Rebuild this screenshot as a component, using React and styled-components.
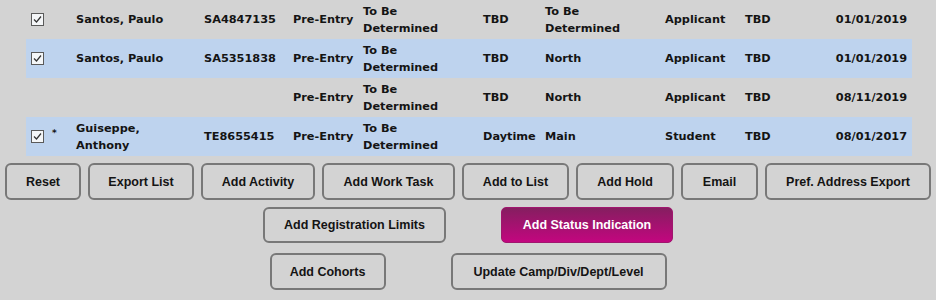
import React from "react";
import styled, { createGlobalStyle } from "styled-components";

const GlobalStyle = createGlobalStyle`
  html, body {
    margin: 0;
    padding: 0;
    background: #d3d3d3;
  }
`;

const Page = styled.div`
  width: 936px;
  height: 300px;
  background: #d3d3d3;
  overflow: hidden;
`;

const Table = styled.div`
  padding-left: 26px;
  width: 886px;
`;

const Row = styled.div`
  display: grid;
  grid-template-columns: 20px 25px 128px 89px 70px 120px 62px 120px 80px 80px 1fr;
  align-items: center;
  height: 39px;
  padding: 0 5px;
  background: ${(p) => (p.$alt ? "#bed3ee" : "transparent")};
  font-family: "DejaVu Sans", "Liberation Sans", sans-serif;
  font-weight: bold;
  font-size: 11.3px;
  line-height: 17px;
  color: #141414;
`;

const Cell = styled.div`
  text-align: ${(p) => (p.$right ? "right" : "left")};
  white-space: ${(p) => (p.$wrap ? "normal" : "nowrap")};
`;

const Star = styled.div`
  font-size: 9px;
  line-height: 9px;
  margin-top: -6px;
  padding-left: 1px;
`;

const Box = styled.div`
  width: 11px;
  height: 11px;
  border: 1px solid #5a5a5a;
  background: #f4f6f8;
  display: flex;
  align-items: center;
  justify-content: center;
`;

const Check = () => (
  <Box>
    <svg width="9" height="9" viewBox="0 0 9 9">
      <path d="M1 4.5 L3.5 7 L8 1.5" fill="none" stroke="#333" strokeWidth="1.2" />
    </svg>
  </Box>
);

const Buttons = styled.div`
  display: flex;
  justify-content: center;
  gap: ${(p) => p.$gap}px;
  margin-top: ${(p) => p.$top}px;
`;

const Button = styled.button`
  width: ${(p) => p.$w}px;
  height: ${(p) => p.$h || 37}px;
  box-sizing: border-box;
  border: 2px solid #787878;
  border-radius: 6px;
  background: #d3d3d3;
  color: #141414;
  font-family: "Liberation Sans", Arial, sans-serif;
  font-weight: bold;
  font-size: 12.5px;
  padding: 0;
  cursor: pointer;
`;

const StatusButton = styled(Button)`
  border: 1px solid #a0166e;
  border-radius: 5px;
  background: linear-gradient(to bottom, #851e60, #c3067f);
  color: #ffffff;
`;

const rows = [
  { check: true, name: "Santos, Paulo", id: "SA4847135", stage: "Pre-Entry", prog: "To Be Determined", sess: "TBD", campus: "To Be Determined", type: "Applicant", tbd: "TBD", date: "01/01/2019" },
  { check: true, name: "Santos, Paulo", id: "SA5351838", stage: "Pre-Entry", prog: "To Be Determined", sess: "TBD", campus: "North", type: "Applicant", tbd: "TBD", date: "01/01/2019" },
  { check: false, name: "", id: "", stage: "Pre-Entry", prog: "To Be Determined", sess: "TBD", campus: "North", type: "Applicant", tbd: "TBD", date: "08/11/2019" },
  { check: true, star: true, name: "Guiseppe, Anthony", id: "TE8655415", stage: "Pre-Entry", prog: "To Be Determined", sess: "Daytime", campus: "Main", type: "Student", tbd: "TBD", date: "08/01/2017" },
];

const wrapTwo = (text) => {
  if (text === "To Be Determined") return (<>To Be<br />Determined</>);
  if (text === "Guiseppe, Anthony") return (<>Guiseppe,<br />Anthony</>);
  return text;
};

const App = () => {
  return (
    <Page>
      <GlobalStyle />
      <Table>
        {rows.map((r, i) => (
          <Row key={i} $alt={i % 2 === 1}>
            <Cell>{r.check && <Check />}</Cell>
            <Cell>{r.star && <Star>*</Star>}</Cell>
            <Cell>{wrapTwo(r.name)}</Cell>
            <Cell>{r.id}</Cell>
            <Cell>{r.stage}</Cell>
            <Cell>{wrapTwo(r.prog)}</Cell>
            <Cell>{r.sess}</Cell>
            <Cell>{wrapTwo(r.campus)}</Cell>
            <Cell>{r.type}</Cell>
            <Cell>{r.tbd}</Cell>
            <Cell $right>{r.date}</Cell>
          </Row>
        ))}
      </Table>
      <Buttons $gap={7} $top={7}>
        <Button $w={76}>Reset</Button>
        <Button $w={106}>Export List</Button>
        <Button $w={114}>Add Activity</Button>
        <Button $w={133}>Add Work Task</Button>
        <Button $w={107}>Add to List</Button>
        <Button $w={98}>Add Hold</Button>
        <Button $w={77}>Email</Button>
        <Button $w={166}>Pref. Address Export</Button>
      </Buttons>
      <Buttons $gap={55} $top={7}>
        <Button $w={183} $h={36}>Add Registration Limits</Button>
        <StatusButton $w={172} $h={36}>Add Status Indication</StatusButton>
      </Buttons>
      <Buttons $gap={65} $top={10}>
        <Button $w={116}>Add Cohorts</Button>
        <Button $w={216}>Update Camp/Div/Dept/Level</Button>
      </Buttons>
    </Page>
  );
};

export default App;
